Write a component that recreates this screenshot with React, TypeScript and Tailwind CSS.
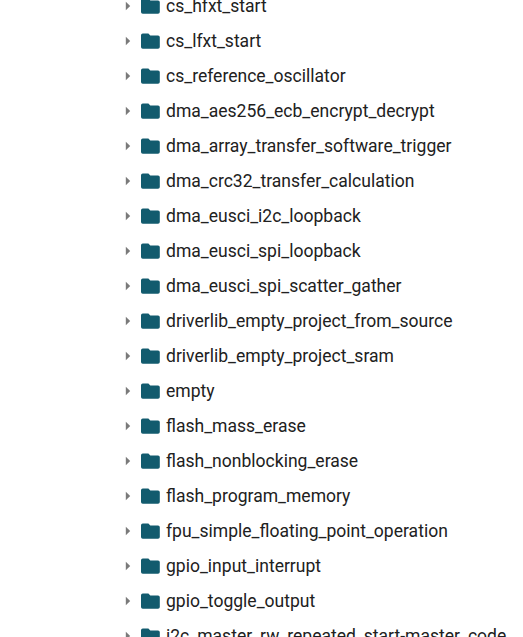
const folders = [
  'cs_hfxt_start',
  'cs_lfxt_start',
  'cs_reference_oscillator',
  'dma_aes256_ecb_encrypt_decrypt',
  'dma_array_transfer_software_trigger',
  'dma_crc32_transfer_calculation',
  'dma_eusci_i2c_loopback',
  'dma_eusci_spi_loopback',
  'dma_eusci_spi_scatter_gather',
  'driverlib_empty_project_from_source',
  'driverlib_empty_project_sram',
  'empty',
  'flash_mass_erase',
  'flash_nonblocking_erase',
  'flash_program_memory',
  'fpu_simple_floating_point_operation',
  'gpio_input_interrupt',
  'gpio_toggle_output',
  'i2c_master_rw_repeated_start-master_code',
];

function TreeRow({ name }: { name: string }) {
  return (
    <div className="flex h-[35px] items-center whitespace-nowrap">
      <svg className="mb-[2px] ml-[125px] h-[10px] w-[6px] text-[#7a7a7a]" viewBox="0 0 6 10">
        <path d="M0.8 0.8 L5.2 5 L0.8 9.2 Z" fill="currentColor" />
      </svg>
      <svg className="mb-[2px] ml-[10px] h-[16px] w-[19px] text-[#125b6e]" viewBox="0 0 19 16">
        <path
          d="M1.8 0.5 H7.4 L9.3 2.4 H17 A1.8 1.8 0 0 1 18.8 4.2 V13.9 A1.8 1.8 0 0 1 17 15.7 H1.8 A1.8 1.8 0 0 1 0 13.9 V2.3 A1.8 1.8 0 0 1 1.8 0.5 Z"
          fill="currentColor"
        />
      </svg>
      <span className="ml-[6px] text-[17.55px] leading-none text-[#212121]">{name}</span>
    </div>
  );
}

export default function App() {
  return (
    <div className="h-[637px] w-[523px] overflow-hidden bg-white font-['Roboto',sans-serif]">
      <div className="-mt-[11px]">
        {folders.map((name) => (
          <TreeRow key={name} name={name} />
        ))}
      </div>
    </div>
  );
}
